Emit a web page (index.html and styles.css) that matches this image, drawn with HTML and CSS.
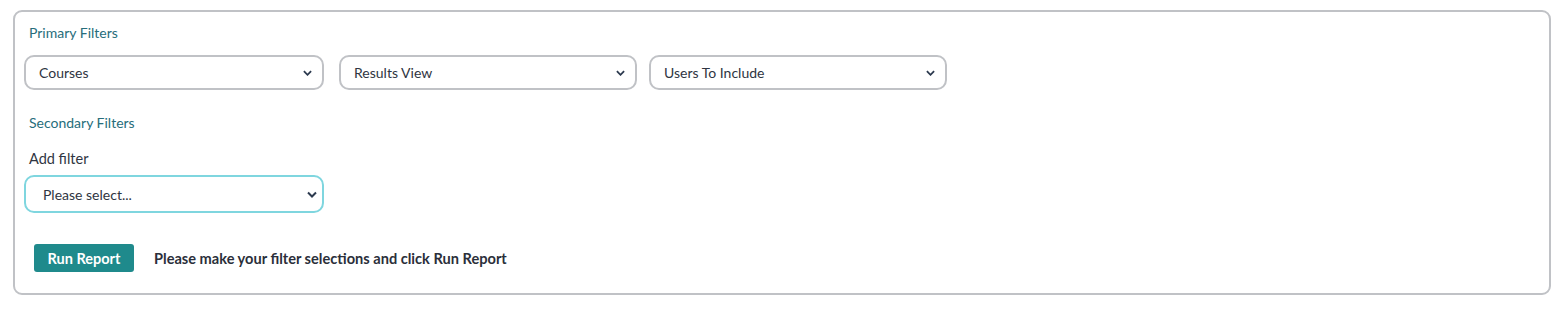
FILE: index.html
```html
<!DOCTYPE html>
<html lang="en">
<head>
    <meta charset="UTF-8">
    <meta name="viewport" content="width=device-width, initial-scale=1.0">
    <title>Report Filters</title>
    <link rel="stylesheet" href="styles.css">
</head>
<body>
    <div class="panel">
        <div class="section-title">Primary Filters</div>
        <div class="filter-row">
            <div class="select wide">
                <span>Courses</span>
                <svg class="chevron" viewBox="0 0 10 6"><path d="M1 1l4 4 4-4" /></svg>
            </div>
            <div class="select">
                <span>Results View</span>
                <svg class="chevron" viewBox="0 0 10 6"><path d="M1 1l4 4 4-4" /></svg>
            </div>
            <div class="select">
                <span>Users To Include</span>
                <svg class="chevron" viewBox="0 0 10 6"><path d="M1 1l4 4 4-4" /></svg>
            </div>
        </div>

        <div class="section-title secondary">Secondary Filters</div>
        <label class="field-label">Add filter</label>
        <div class="select wide focus">
            <span>Please select...</span>
            <svg class="chevron" viewBox="0 0 10 6"><path d="M1 1l4 4 4-4" /></svg>
        </div>

        <div class="actions">
            <button class="run-button">Run Report</button>
            <span class="hint">Please make your filter selections and click Run Report</span>
        </div>
    </div>
</body>
</html>
```

FILE: styles.css
```css
body {
    font-family: Lato, "Open Sans", sans-serif;
    margin: 0;
    padding: 10px 12px 0 13px;
    background-color: #fff;
    color: #2f3542;
}

.panel {
    border: 2px solid #c0c2c6;
    border-radius: 9px;
    padding: 12px 9px 19px;
    height: 250px;
}

.section-title {
    font-size: 14px;
    color: #276d7b;
    margin-left: 5px;
    line-height: 18px;
}

.secondary {
    margin-top: 24px;
}

.filter-row {
    display: flex;
    margin-top: 13px;
}

.select {
    box-sizing: border-box;
    display: flex;
    align-items: center;
    justify-content: space-between;
    width: 298px;
    height: 35px;
    border: 2px solid #c0c2c6;
    border-radius: 10px;
    padding: 0 10px 0 13px;
    font-size: 14px;
    color: #2f3542;
    margin-right: 12px;
}

.select.wide {
    width: 300px;
    margin-right: 15px;
}

.select.focus {
    height: 38px;
    border-color: #7fd6df;
    padding-left: 17px;
    padding-right: 5px;
}

.chevron {
    width: 9px;
    height: 6px;
    fill: none;
    stroke: #2c3a4f;
    stroke-width: 2;
}

.focus .chevron {
    width: 10px;
    height: 7px;
}

.field-label {
    display: block;
    font-size: 14.5px;
    color: #2f3542;
    margin: 18px 0 7px 5px;
    line-height: 18px;
}

.actions {
    display: flex;
    align-items: center;
    margin-top: 31px;
    margin-left: 10px;
}

.run-button {
    background-color: #1f8a8c;
    color: white;
    border: none;
    border-radius: 3px;
    font-family: Lato, sans-serif;
    font-weight: bold;
    font-size: 14.5px;
    width: 100px;
    height: 28px;
    padding: 0;
}

.hint {
    margin-left: 20px;
    font-weight: bold;
    font-size: 14.6px;
    color: #2b2f3a;
}
```
